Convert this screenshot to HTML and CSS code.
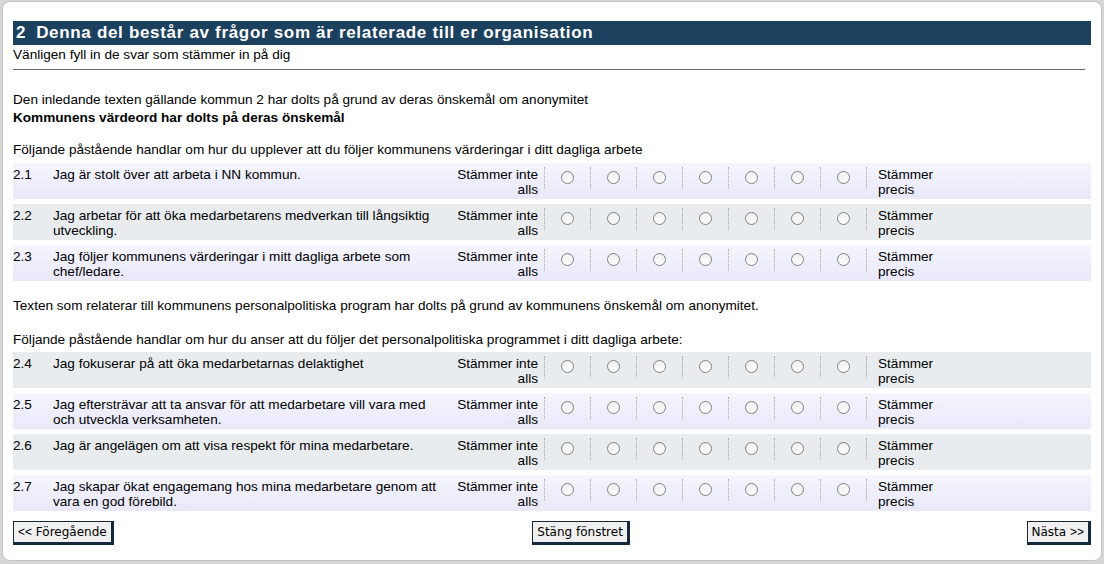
FILE: index.html
```html
<!DOCTYPE html>
<html>
    <head>
        <meta charset="UTF-8" />
        <title>Enkät</title>
        <link rel="stylesheet" href="styles.css">
    </head>
    <body>
        <div class="card">
            <h2 class="section-title"><span class="section-no">2</span>Denna del består av frågor som är relaterade till er organisation</h2>
            <p class="subtitle">Vänligen fyll in de svar som stämmer in på dig</p>
            <hr class="rule">

            <p class="intro">Den inledande texten gällande kommun 2 har dolts på grund av deras önskemål om anonymitet<br><b>Kommunens värdeord har dolts på deras önskemål</b></p>

            <p class="lead">Följande påstående handlar om hur du upplever att du följer kommunens värderingar i ditt dagliga arbete</p>
            <div class="questions">
                <div class="row odd">
                    <span class="num">2.1</span>
                    <span class="text">Jag är stolt över att arbeta i NN kommun.</span>
                    <span class="low">Stämmer inte alls</span>
                    <span class="opt"><input type="radio" name="q21"></span>
                    <span class="opt"><input type="radio" name="q21"></span>
                    <span class="opt"><input type="radio" name="q21"></span>
                    <span class="opt"><input type="radio" name="q21"></span>
                    <span class="opt"><input type="radio" name="q21"></span>
                    <span class="opt"><input type="radio" name="q21"></span>
                    <span class="opt"><input type="radio" name="q21"></span>
                    <span class="high">Stämmer<br>precis</span>
                </div>
                <div class="row even">
                    <span class="num">2.2</span>
                    <span class="text">Jag arbetar för att öka medarbetarens medverkan till långsiktig utveckling.</span>
                    <span class="low">Stämmer inte alls</span>
                    <span class="opt"><input type="radio" name="q22"></span>
                    <span class="opt"><input type="radio" name="q22"></span>
                    <span class="opt"><input type="radio" name="q22"></span>
                    <span class="opt"><input type="radio" name="q22"></span>
                    <span class="opt"><input type="radio" name="q22"></span>
                    <span class="opt"><input type="radio" name="q22"></span>
                    <span class="opt"><input type="radio" name="q22"></span>
                    <span class="high">Stämmer<br>precis</span>
                </div>
                <div class="row odd">
                    <span class="num">2.3</span>
                    <span class="text">Jag följer kommunens värderingar i mitt dagliga arbete som chef/ledare.</span>
                    <span class="low">Stämmer inte alls</span>
                    <span class="opt"><input type="radio" name="q23"></span>
                    <span class="opt"><input type="radio" name="q23"></span>
                    <span class="opt"><input type="radio" name="q23"></span>
                    <span class="opt"><input type="radio" name="q23"></span>
                    <span class="opt"><input type="radio" name="q23"></span>
                    <span class="opt"><input type="radio" name="q23"></span>
                    <span class="opt"><input type="radio" name="q23"></span>
                    <span class="high">Stämmer<br>precis</span>
                </div>
            </div>

            <p class="lead spaced">Texten som relaterar till kommunens personalpolitiska program har dolts på grund av kommunens önskemål om anonymitet.</p>

            <p class="lead spaced">Följande påstående handlar om hur du anser att du följer det personalpolitiska programmet i ditt dagliga arbete:</p>
            <div class="questions tight">
                <div class="row even">
                    <span class="num">2.4</span>
                    <span class="text">Jag fokuserar på att öka medarbetarnas delaktighet</span>
                    <span class="low">Stämmer inte alls</span>
                    <span class="opt"><input type="radio" name="q24"></span>
                    <span class="opt"><input type="radio" name="q24"></span>
                    <span class="opt"><input type="radio" name="q24"></span>
                    <span class="opt"><input type="radio" name="q24"></span>
                    <span class="opt"><input type="radio" name="q24"></span>
                    <span class="opt"><input type="radio" name="q24"></span>
                    <span class="opt"><input type="radio" name="q24"></span>
                    <span class="high">Stämmer<br>precis</span>
                </div>
                <div class="row odd">
                    <span class="num">2.5</span>
                    <span class="text">Jag eftersträvar att ta ansvar för att medarbetare vill vara med och utveckla verksamheten.</span>
                    <span class="low">Stämmer inte alls</span>
                    <span class="opt"><input type="radio" name="q25"></span>
                    <span class="opt"><input type="radio" name="q25"></span>
                    <span class="opt"><input type="radio" name="q25"></span>
                    <span class="opt"><input type="radio" name="q25"></span>
                    <span class="opt"><input type="radio" name="q25"></span>
                    <span class="opt"><input type="radio" name="q25"></span>
                    <span class="opt"><input type="radio" name="q25"></span>
                    <span class="high">Stämmer<br>precis</span>
                </div>
                <div class="row even">
                    <span class="num">2.6</span>
                    <span class="text">Jag är angelägen om att visa respekt för mina medarbetare.</span>
                    <span class="low">Stämmer inte alls</span>
                    <span class="opt"><input type="radio" name="q26"></span>
                    <span class="opt"><input type="radio" name="q26"></span>
                    <span class="opt"><input type="radio" name="q26"></span>
                    <span class="opt"><input type="radio" name="q26"></span>
                    <span class="opt"><input type="radio" name="q26"></span>
                    <span class="opt"><input type="radio" name="q26"></span>
                    <span class="opt"><input type="radio" name="q26"></span>
                    <span class="high">Stämmer<br>precis</span>
                </div>
                <div class="row odd">
                    <span class="num">2.7</span>
                    <span class="text">Jag skapar ökat engagemang hos mina medarbetare genom att vara en god förebild.</span>
                    <span class="low">Stämmer inte alls</span>
                    <span class="opt"><input type="radio" name="q27"></span>
                    <span class="opt"><input type="radio" name="q27"></span>
                    <span class="opt"><input type="radio" name="q27"></span>
                    <span class="opt"><input type="radio" name="q27"></span>
                    <span class="opt"><input type="radio" name="q27"></span>
                    <span class="opt"><input type="radio" name="q27"></span>
                    <span class="opt"><input type="radio" name="q27"></span>
                    <span class="high">Stämmer<br>precis</span>
                </div>
            </div>

            <div class="nav">
                <button class="nav-btn"><span class="arrows">&lt;&lt;</span> Föregående</button>
                <button class="nav-btn middle">Stäng fönstret</button>
                <button class="nav-btn">Nästa <span class="arrows">&gt;&gt;</span></button>
            </div>
        </div>
    </body>
</html>
```

FILE: styles.css
```css
body {
    margin: 0;
    padding: 1px 2px 3px 2px;
    background: #d6d6d6;
    font-family: "Liberation Sans", Arial, sans-serif;
    font-size: 13.6px;
    color: #000;
}

.card {
    background: #fff;
    border: 1px solid #c4c4c4;
    border-radius: 8px;
    padding: 19px 10px 15px 10px;
}

.section-title {
    margin: 0;
    height: 24px;
    line-height: 24px;
    padding-left: 3px;
    background: #1c415e;
    color: #fff;
    font-size: 17px;
    font-weight: bold;
    letter-spacing: 0.68px;
}

.section-no {
    margin-right: 10px;
}

.subtitle {
    margin: 1px 0 0 0;
    line-height: 18px;
}

.rule {
    margin: 5px 6px 0 0;
    border: none;
    border-top: 1px solid #6a6a6a;
    height: 0;
}

.intro {
    margin: 21px 0 0 0;
    line-height: 18px;
}

.lead {
    margin: 14px 0 0 0;
    line-height: 18px;
}

.lead.spaced {
    margin-top: 16px;
}

.questions {
    margin-top: 4px;
    display: flex;
    flex-direction: column;
    gap: 5px;
}

.questions.tight {
    margin-top: 3px;
}

.row {
    display: grid;
    grid-template-columns: 40px 392px 99px repeat(7, 1fr) 225px;
    height: 36px;
    line-height: 15px;
}

.row.odd {
    background: linear-gradient(to bottom, #f5f5fe, #e8e8f9);
}

.row.even {
    background: #e8ecee;
}

.num,
.text,
.low {
    padding-top: 4px;
}

.text {
    padding-right: 4px;
}

.low {
    text-align: right;
    padding-right: 6px;
}

.opt {
    margin-top: 4px;
    height: 22px;
    border-left: 1px dotted #a8a8a8;
    display: flex;
    justify-content: center;
    padding-top: 4px;
    box-sizing: border-box;
}

.high {
    margin-top: 4px;
    padding-left: 11px;
    border-left: 1px dotted #a8a8a8;
    height: 22px;
}

input[type="radio"] {
    appearance: none;
    -webkit-appearance: none;
    margin: 0;
    width: 13px;
    height: 13px;
    border: 1px solid #808080;
    border-radius: 50%;
    background: linear-gradient(to bottom, #f0f0f0, #fff);
    box-sizing: border-box;
}

.nav {
    margin-top: 10px;
    display: flex;
    justify-content: space-between;
}

.nav-btn {
    font-family: "DejaVu Sans", Verdana, sans-serif;
    font-size: 12px;
    color: #000;
    background: #f0f0f0;
    border-style: solid;
    border-color: #15293a;
    border-width: 1px 3px 3px 1px;
    height: 24px;
    padding: 0 4px;
    line-height: 18px;
}

.arrows {
    font-family: "Liberation Sans", Arial, sans-serif;
}

.nav-btn.middle {
    margin-left: 22px;
}
```
